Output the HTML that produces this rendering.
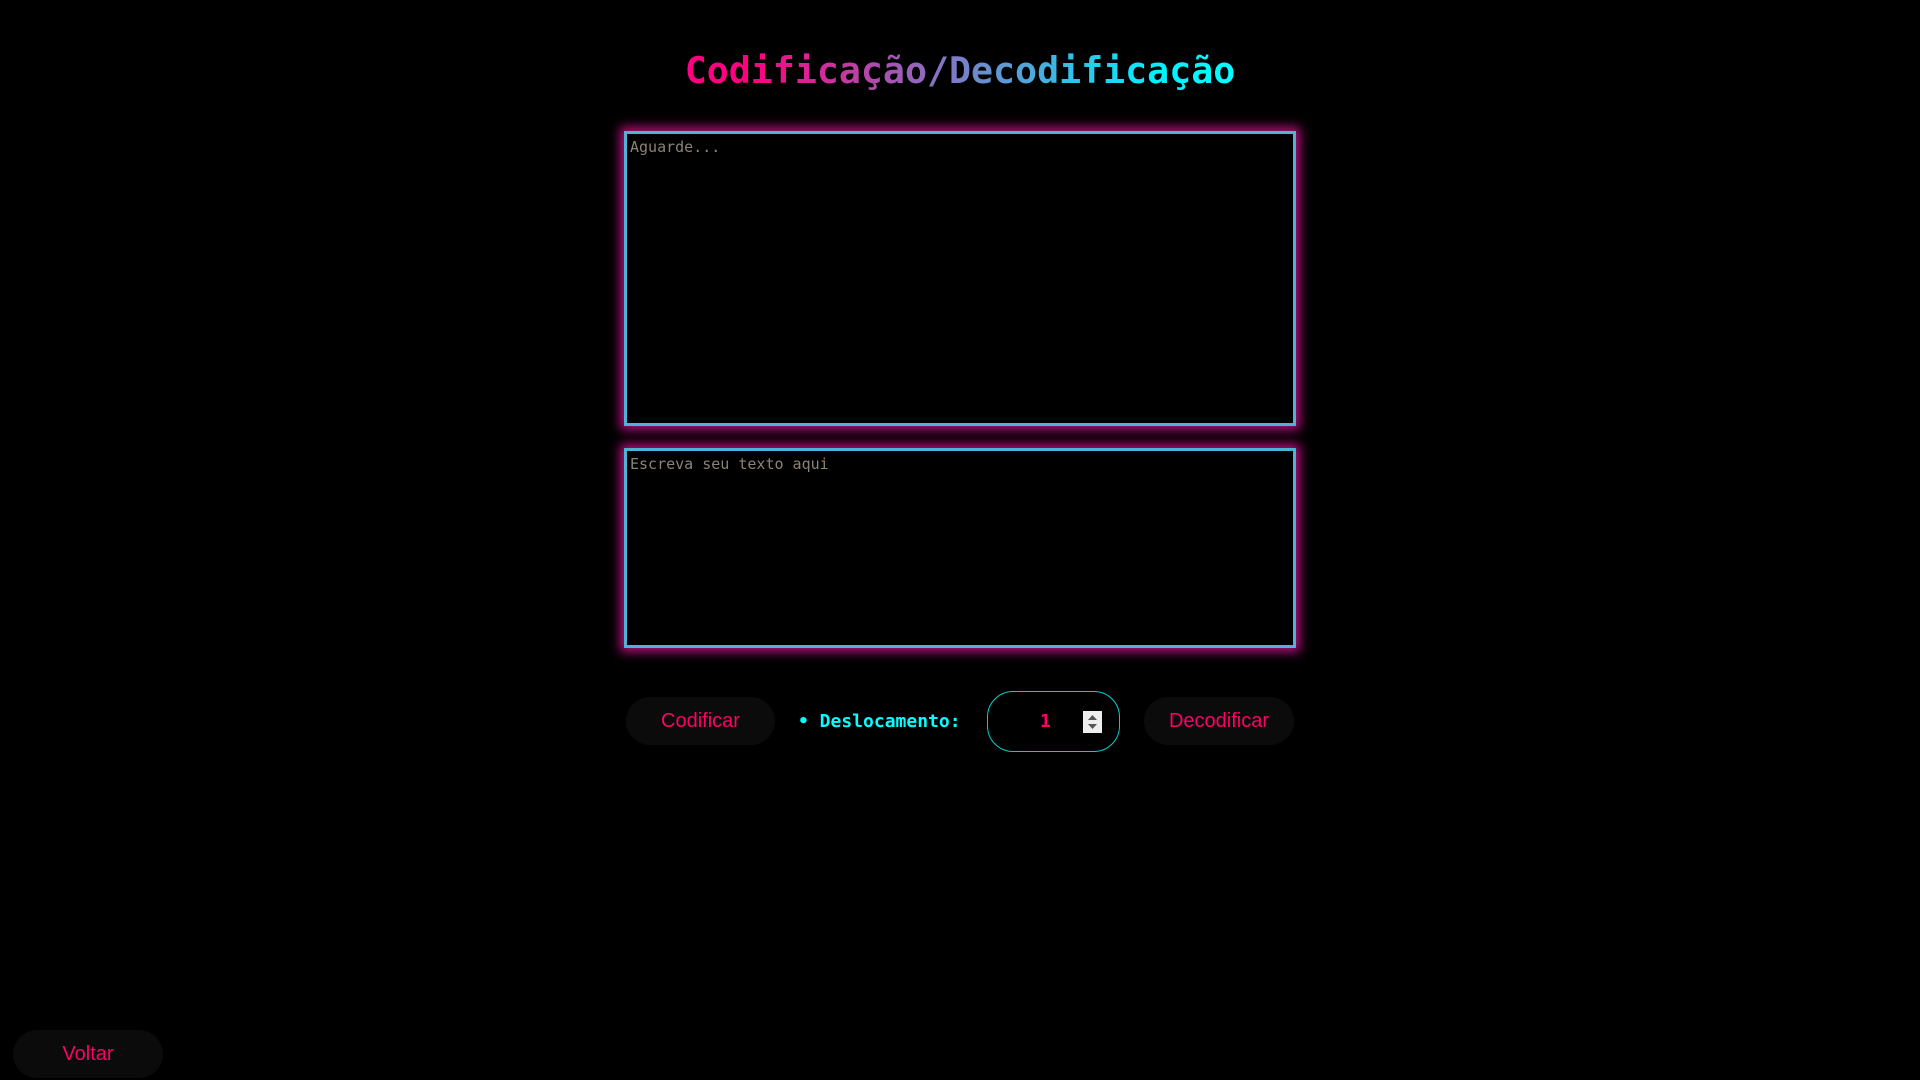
<!DOCTYPE html>
<html><head><meta charset="utf-8"><style>
html,body{margin:0;background:#000;width:1920px;height:1080px;overflow:hidden;font-family:"Liberation Sans",sans-serif}
h1{position:absolute;left:0;width:1920px;top:46px;margin:0;text-align:center;font-family:"DejaVu Sans Mono",monospace;font-weight:bold;font-size:36.6px;line-height:50px}
h1 span{background:linear-gradient(90deg,#ff0080,#ff0080 12%,#8a6fc0 45%,#00f0ff 85%,#00ffff);-webkit-background-clip:text;background-clip:text;color:transparent}
.ta{position:absolute;left:624px;width:666px;border:3px solid #4fb3d9;box-shadow:0 0 10px 4px #b0107a;background:#000}
.ta div{font-family:"DejaVu Sans Mono",monospace;font-size:15px;color:#8c8275;padding:4px 0 0 3px}
.btn{position:absolute;height:48px;border-radius:24px;background:#0b0b0b;color:#ff0066;font-size:20px;line-height:48px;text-align:center}
</style></head><body>
<h1><span>Codificação/Decodificação</span></h1>
<div class="ta" style="top:131px;height:289px"><div>Aguarde...</div></div>
<div class="ta" style="top:448px;height:194px"><div>Escreva seu texto aqui</div></div>
<div class="btn" style="left:626px;top:697px;width:149px">Codificar</div>
<div style="position:absolute;left:798px;top:709px;font-family:'DejaVu Sans Mono',monospace;font-weight:bold;font-size:18px;color:#00ffff;line-height:26px">• Deslocamento:</div>
<div style="position:absolute;left:987px;top:691px;width:131px;height:59px;border:1px solid #00d0d0;border-radius:26px">
<div style="position:absolute;left:52px;top:19px;font-family:'DejaVu Sans Mono',monospace;font-weight:bold;font-size:18px;color:#ff0066">1</div>
<div style="position:absolute;left:95px;top:19px;width:19px;height:22px;background:#eee">
<svg width="19" height="22"><path d="M5 9 L9.5 4 L14 9Z M5 13 L9.5 18 L14 13Z" fill="#555"/></svg></div>
</div>
<div class="btn" style="left:1144px;top:697px;width:150px">Decodificar</div>
<div class="btn" style="left:13px;top:1030px;width:150px">Voltar</div>
</body></html>
